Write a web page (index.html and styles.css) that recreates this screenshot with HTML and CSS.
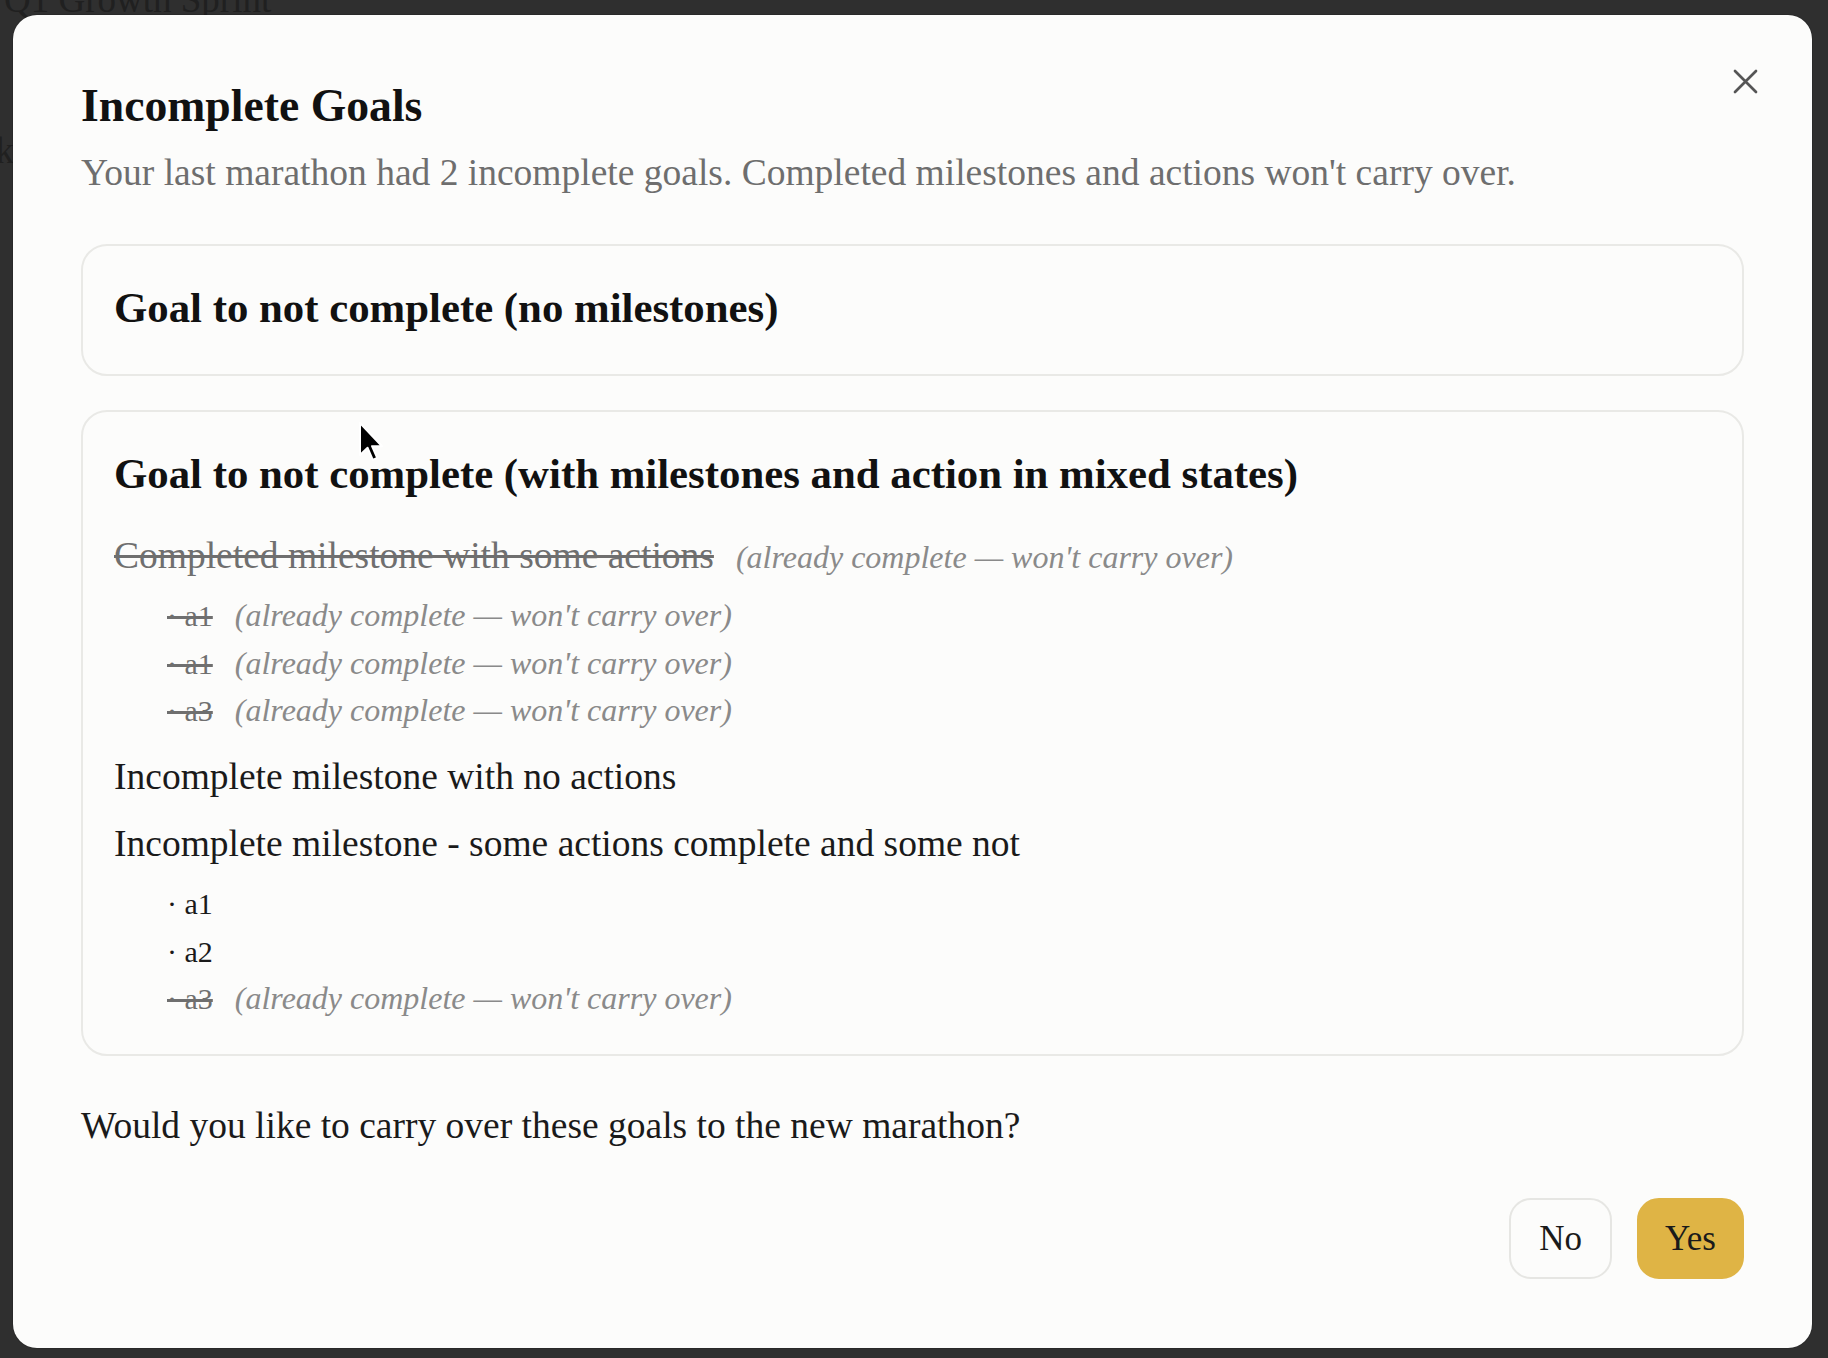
FILE: index.html
```html
<!DOCTYPE html>
<html lang="en">
<head>
    <meta charset="UTF-8">
    <meta name="viewport" content="width=device-width, initial-scale=1.0">
    <title>Incomplete Goals</title>
    <link rel="stylesheet" href="styles.css">
</head>
<body>
    <div class="page">
        <div class="page-title">Q1 Growth Sprint</div>
        <div class="page-nav">Back</div>
    </div>

    <div class="overlay">
        <div class="modal">
            <button class="close" aria-label="Close">
                <svg viewBox="0 0 25 25" width="25" height="25">
                    <path d="M2 2 L23 23 M23 2 L2 23" stroke="#555" stroke-width="2.7" stroke-linecap="round" fill="none"/>
                </svg>
            </button>

            <h2 class="modal-title">Incomplete Goals</h2>
            <p class="modal-subtitle">Your last marathon had 2 incomplete goals. Completed milestones and actions won't carry over.</p>

            <div class="goal-list">
                <div class="goal-card">
                    <h3 class="goal-title">Goal to not complete (no milestones)</h3>
                </div>

                <div class="goal-card">
                    <h3 class="goal-title">Goal to not complete (with milestones and action in mixed states)</h3>
                    <div class="milestones">
                        <div class="milestone">
                            <div class="milestone-name"><span class="done">Completed milestone with some actions</span><span class="note">(already complete — won't carry over)</span></div>
                            <ul class="actions">
                                <li><span class="done">&middot; a1</span><span class="note">(already complete — won't carry over)</span></li>
                                <li><span class="done">&middot; a1</span><span class="note">(already complete — won't carry over)</span></li>
                                <li><span class="done">&middot; a3</span><span class="note">(already complete — won't carry over)</span></li>
                            </ul>
                        </div>
                        <div class="milestone">
                            <div class="milestone-name">Incomplete milestone with no actions</div>
                        </div>
                        <div class="milestone">
                            <div class="milestone-name">Incomplete milestone - some actions complete and some not</div>
                            <ul class="actions">
                                <li>&middot; a1</li>
                                <li>&middot; a2</li>
                                <li><span class="done">&middot; a3</span><span class="note">(already complete — won't carry over)</span></li>
                            </ul>
                        </div>
                    </div>
                </div>
            </div>

            <p class="question">Would you like to carry over these goals to the new marathon?</p>

            <div class="button-row">
                <button class="btn">No</button>
                <button class="btn btn-primary">Yes</button>
            </div>
        </div>
    </div>

    <svg class="cursor" viewBox="0 0 13 21" width="26" height="42">
        <path d="M1 1 L1 17 L4.8 13.4 L7.4 19.4 L9.6 18.4 L7 12.6 L12 12.6 Z" fill="#000" stroke="#fff" stroke-width="1" stroke-linejoin="round"/>
    </svg>
</body>
</html>
```

FILE: styles.css
```css
body {
    margin: 0;
    height: 1358px;
    overflow: hidden;
    background-color: #2f2f2f;
    font-family: "Liberation Serif", "Times New Roman", serif;
}

/* page behind the dialog */
.page {
    color: #202020;
    font-size: 37px;
    line-height: 37px;
    padding-left: 4px;
}
.page-title {
    margin-top: -19px;
}
.page-nav {
    margin-top: 114px;
    text-indent: -66px;
}

.modal {
    position: absolute;
    top: 15px;
    left: 13px;
    width: 1799px;
    box-sizing: border-box;
    padding: 62.5px 68px 68.5px 68px;
    background-color: #fcfcfb;
    border-radius: 24px;
    box-shadow: 0 0 0 1px rgba(0, 0, 0, 0.12);
}

.close {
    position: absolute;
    top: 54px;
    right: 54px;
    width: 25px;
    height: 25px;
    padding: 0;
    border: 0;
    background: none;
    cursor: pointer;
}
.close svg {
    display: block;
}

.modal-title {
    margin: 0;
    font-size: 45.7px;
    line-height: 56px;
    font-weight: bold;
    color: #111;
}
.modal-subtitle {
    margin: 13px 0 0;
    font-size: 37.5px;
    line-height: 52px;
    color: #6e6e6e;
}

.goal-list {
    margin-top: 45.5px;
    display: flex;
    flex-direction: column;
    gap: 34px;
}
.goal-card {
    border: 2px solid #e9e9e6;
    border-radius: 26px;
    padding: 37px 31px 31px;
}
.goal-title {
    margin: 0 0 10px;
    font-size: 42.8px;
    line-height: 50px;
    font-weight: bold;
    color: #111;
}

.milestones {
    margin-top: 31.5px;
    display: flex;
    flex-direction: column;
    gap: 17px;
}
.milestone-name {
    font-size: 37.5px;
    line-height: 50px;
    color: #1a1a1a;
}
.actions {
    margin: 11.6px 0 0;
    padding: 0 0 0 53px;
    list-style: none;
    font-size: 30px;
    line-height: 47.5px;
    color: #1a1a1a;
}

.done {
    text-decoration: line-through;
    color: #6f6f6f;
}
.note {
    margin-left: 22px;
    font-style: italic;
    font-size: 32px;
    line-height: 1;
    color: #8a8a8a;
}

.question {
    margin: 45.5px 0 0;
    font-size: 37.5px;
    line-height: 50px;
    color: #1a1a1a;
}

.button-row {
    margin-top: 47px;
    display: flex;
    justify-content: flex-end;
    gap: 25px;
}
.btn {
    height: 81px;
    padding: 0 28px;
    border: 2px solid #e6e6e3;
    border-radius: 22px;
    background-color: #fcfcfb;
    font-family: inherit;
    font-size: 35px;
    color: #1a1a1a;
    cursor: pointer;
}
.btn-primary {
    padding: 0 26px;
    background-color: #dfb445;
    border-color: #dfb445;
}

.cursor {
    position: absolute;
    left: 358px;
    top: 421px;
}
```
